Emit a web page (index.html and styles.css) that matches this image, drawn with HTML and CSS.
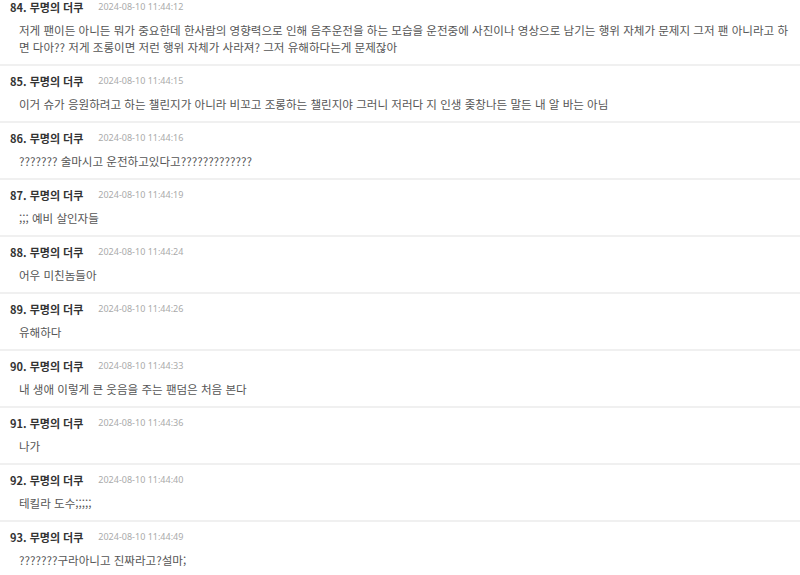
FILE: index.html
```html
<!DOCTYPE html>
<html lang="ko">
<head>
<meta charset="utf-8">
<link rel="stylesheet" href="styles.css">
</head>
<body>
<div class="list">
  <div class="item first">
    <div class="head"><span class="name">84. 무명의 더쿠</span><span class="date">2024-08-10 11:44:12</span></div>
    <div class="body">저게 팬이든 아니든 뭐가 중요한데 한사람의 영향력으로 인해 음주운전을 하는 모습을 운전중에 사진이나 영상으로 남기는 행위 자체가 문제지 그저 팬 아니라고 하면 다아?? 저게 조롱이면 저런 행위 자체가 사라져? 그저 유해하다는게 문제잖아</div>
  </div>
  <div class="item">
    <div class="head"><span class="name">85. 무명의 더쿠</span><span class="date">2024-08-10 11:44:15</span></div>
    <div class="body">이거 슈가 응원하려고 하는 챌린지가 아니라 비꼬고 조롱하는 챌린지야 그러니 저러다 지 인생 좆창나든 말든 내 알 바는 아님</div>
  </div>
  <div class="item">
    <div class="head"><span class="name">86. 무명의 더쿠</span><span class="date">2024-08-10 11:44:16</span></div>
    <div class="body">??????? 술마시고 운전하고있다고?????????????</div>
  </div>
  <div class="item">
    <div class="head"><span class="name">87. 무명의 더쿠</span><span class="date">2024-08-10 11:44:19</span></div>
    <div class="body">;;; 예비 살인자들</div>
  </div>
  <div class="item">
    <div class="head"><span class="name">88. 무명의 더쿠</span><span class="date">2024-08-10 11:44:24</span></div>
    <div class="body">어우 미친놈들아</div>
  </div>
  <div class="item">
    <div class="head"><span class="name">89. 무명의 더쿠</span><span class="date">2024-08-10 11:44:26</span></div>
    <div class="body">유해하다</div>
  </div>
  <div class="item">
    <div class="head"><span class="name">90. 무명의 더쿠</span><span class="date">2024-08-10 11:44:33</span></div>
    <div class="body">내 생애 이렇게 큰 웃음을 주는 팬덤은 처음 본다</div>
  </div>
  <div class="item">
    <div class="head"><span class="name">91. 무명의 더쿠</span><span class="date">2024-08-10 11:44:36</span></div>
    <div class="body">나가</div>
  </div>
  <div class="item">
    <div class="head"><span class="name">92. 무명의 더쿠</span><span class="date">2024-08-10 11:44:40</span></div>
    <div class="body">테킬라 도수;;;;;</div>
  </div>
  <div class="item">
    <div class="head"><span class="name">93. 무명의 더쿠</span><span class="date">2024-08-10 11:44:49</span></div>
    <div class="body">???????구라아니고 진짜라고?설마;</div>
  </div>
</div>
</body>
</html>
```

FILE: styles.css
```css
html, body {
  margin: 0;
  padding: 0;
  background: #fff;
}
body {
  font-family: "Noto Sans CJK KR", "Noto Sans", sans-serif;
  overflow: hidden;
}
.item {
  padding: 8px 10px 8px 10px;
  border-bottom: 2px solid #f0f0f0;
}
.item.first {
  padding-top: 0;
}
.head {
  display: flex;
  align-items: center;
  height: 14px;
  line-height: 14px;
}
.name {
  font-size: 11px;
  font-weight: bold;
  color: #333;
}
.date {
  margin-left: 15px;
  font-family: "Noto Sans", sans-serif;
  font-size: 9px;
  color: #aaa;
}
.body {
  margin-top: 8px;
  padding-left: 9px;
  font-size: 11.55px;
  line-height: 17px;
  color: #555;
}
```
